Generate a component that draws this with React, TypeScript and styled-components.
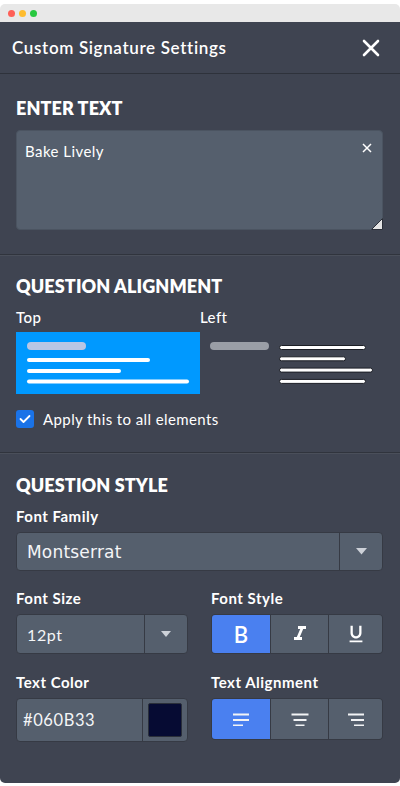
import React, { useState } from 'react'
import styled, { createGlobalStyle } from 'styled-components'
import { MdFormatItalic, MdFormatUnderlined } from 'react-icons/md'

const GlobalStyle = createGlobalStyle`
    html, body {
        margin: 0;
        padding: 0;
        background: #ffffff;
    }
    * {
        box-sizing: border-box;
    }
`;

const Window = styled.div`
    width: 400px;
    margin-top: 4px;
    border-radius: 5px;
    overflow: hidden;
    font-family: 'Lato', 'Liberation Sans', sans-serif;
    color: #ffffff;
`;

const TitleBar = styled.div`
    height: 18px;
    background: #e8e8e8;
    display: flex;
    align-items: center;
    gap: 4px;
    padding-left: 8px;
`;

const Dot = styled.span<{ $color: string }>`
    width: 7px;
    height: 7px;
    border-radius: 50%;
    background: ${p => p.$color};
`;

const Panel = styled.div`
    background: #3f4451;
    display: flex;
    flex-direction: column;
`;

const Header = styled.div`
    height: 52px;
    display: flex;
    align-items: center;
    justify-content: space-between;
    padding: 0 20px 0 12px;
    border-bottom: 1px solid #2e323b;
`;

const Title = styled.h1`
    margin: 0;
    font-size: 17px;
    font-weight: 600;
    letter-spacing: 0.65px;
`;

const CloseButton = styled.button`
    border: none;
    background: none;
    padding: 0;
    display: flex;
    cursor: pointer;
`;

const Section = styled.section<{ $top: number; $bottom: number; $last?: boolean }>`
    padding: ${p => p.$top}px 17px ${p => p.$bottom}px 16px;
    border-bottom: ${p => (p.$last ? 'none' : '1px solid #30343d')};
    box-shadow: ${p => (p.$last ? 'none' : '0 1px 0 #4a4f5a')};
`;

const SectionTitle = styled.h2`
    margin: 0 0 12px;
    font-size: 18px;
    line-height: 20px;
    font-weight: 800;
    letter-spacing: 0.1px;
`;

const TextBox = styled.div`
    position: relative;
    height: 100px;
    background: #555f6d;
    border: 1px solid #4b5461;
    border-radius: 4px;
    padding: 11px 8px;
    font-size: 15px;
    line-height: 18px;
    letter-spacing: 0.45px;
`;

const ClearIcon = styled.span`
    position: absolute;
    top: 12px;
    right: 10px;
    display: flex;
`;

const Grip = styled.span`
    position: absolute;
    right: -1px;
    bottom: -1px;
    display: flex;
`;

const AlignGrid = styled.div`
    display: grid;
    grid-template-columns: 184px 183px;
`;

const OptionLabel = styled.div`
    font-size: 15px;
    line-height: 18px;
    font-weight: 500;
    letter-spacing: 0.4px;
    margin-bottom: 6px;
`;

const OptionCard = styled.div<{ $active?: boolean }>`
    height: 62px;
    background: ${p => (p.$active ? '#0099ff' : 'transparent')};
    display: flex;
`;

const CheckRow = styled.label`
    display: flex;
    align-items: center;
    gap: 9px;
    margin-top: 16px;
    font-size: 15px;
    line-height: 18px;
    letter-spacing: 0.4px;
`;

const CheckBox = styled.span`
    width: 18px;
    height: 18px;
    border-radius: 3px;
    background: #1a73e8;
    display: flex;
    align-items: center;
    justify-content: center;
`;

const FieldLabel = styled.div`
    font-size: 15px;
    line-height: 18px;
    font-weight: 700;
    letter-spacing: 0.5px;
    margin-bottom: 7px;
`;

const FieldGrid = styled.div`
    display: grid;
    grid-template-columns: 172px 172px;
    column-gap: 23px;
    row-gap: 19px;
    margin-top: 18px;
`;

const Select = styled.div<{ $height: number; $caret: number }>`
    height: ${p => p.$height}px;
    display: grid;
    grid-template-columns: 1fr ${p => p.$caret}px;
    background: #555f6d;
    border: 1px solid #363a44;
    border-radius: 4px;
`;

const SelectValue = styled.div<{ $size: number; $pad: number }>`
    display: flex;
    align-items: center;
    padding-left: ${p => p.$pad}px;
    font-size: ${p => p.$size}px;
    letter-spacing: 0.6px;
    color: #f4f5f7;
`;

const MontserratValue = styled(SelectValue)`
    font-family: 'DejaVu Sans', 'Liberation Sans', sans-serif;
    font-weight: 400;
    letter-spacing: 0.2px;
`;

const CaretCell = styled.div`
    display: flex;
    align-items: center;
    justify-content: center;
    border-left: 1px solid #363a44;
`;

const Swatch = styled.span`
    align-self: center;
    justify-self: center;
    width: 34px;
    height: 34px;
    background: #060b33;
    border: 1px solid #2a2f3a;
    border-radius: 2px;
`;

const ButtonGroup = styled.div<{ $height: number }>`
    height: ${p => p.$height}px;
    display: grid;
    grid-template-columns: 58px 57px 1fr;
    border: 1px solid #363a44;
    border-radius: 4px;
    overflow: hidden;
    background: #363a44;
    gap: 1px;
`;

const ToggleButton = styled.button<{ $active?: boolean }>`
    border: none;
    padding: 0;
    background: ${p => (p.$active ? '#4a80f0' : '#555f6d')};
    color: #ffffff;
    display: flex;
    align-items: center;
    justify-content: center;
    font-family: 'Lato', 'Liberation Sans', sans-serif;
    font-size: 22px;
    font-weight: 600;
    cursor: pointer;
`;

const Caret = ({ w }: { w: number }) => (
    <svg width={w} height={w * 0.6} viewBox="0 0 10 6">
        <path d="M0 0 H10 L5 6 Z" fill="#cdd1d8" />
    </svg>
)

type AlignKind = 'left' | 'center' | 'right'

const AlignIcon = ({ kind }: { kind: AlignKind }) => {
    const widths: Record<AlignKind, number[]> = {
        left: [16, 16, 10],
        center: [17, 13, 9],
        right: [16, 13, 10],
    }
    return (
        <svg width="18" height="14" viewBox="0 0 18 14">
            {widths[kind].map((w, i) => {
                const x = kind === 'left' ? 1 : kind === 'center' ? (18 - w) / 2 : 17 - w
                return <rect key={i} x={x} y={1.5 + i * 5.5} width={w} height={2} fill="#f2f3f5" />
            })}
        </svg>
    )
}

const TopPreview = () => (
    <svg width="184" height="62" viewBox="0 0 184 62">
        <rect x="11" y="10" width="59" height="8" rx="4" fill="#b9c6e4" />
        <rect x="11" y="26" width="123" height="4" rx="2" fill="#ffffff" />
        <rect x="11" y="37" width="94" height="4" rx="2" fill="#ffffff" />
        <rect x="11" y="47.5" width="162" height="4" rx="2" fill="#ffffff" />
    </svg>
)

const LeftPreview = () => (
    <svg width="183" height="62" viewBox="0 0 183 62">
        <rect x="10" y="10" width="59" height="8" rx="4" fill="#9a9ea6" />
        {[86, 66, 93, 86].map((w, i) => (
            <rect key={i} x="79.5" y={13.5 + i * 11.3} width={w} height="4" rx="2"
                fill="#ffffff" stroke="#1b1e25" strokeWidth="1" />
        ))}
    </svg>
)

const App: React.FC = () => {
    const [ alignment, setAlignment ] = useState<AlignKind>('left')
    const [ bold, setBold ] = useState(true)

    return (
        <>
            <GlobalStyle />
            <Window>
                <TitleBar>
                    <Dot $color="#fe5f57" />
                    <Dot $color="#febc2e" />
                    <Dot $color="#28c840" />
                </TitleBar>
                <Panel>
                    <Header>
                        <Title>Custom Signature Settings</Title>
                        <CloseButton aria-label="Close">
                            <svg width="18" height="18" viewBox="0 0 18 18">
                                <path d="M2 2 L16 16 M16 2 L2 16" stroke="#ffffff" strokeWidth="2.6" strokeLinecap="round" />
                            </svg>
                        </CloseButton>
                    </Header>

                    <Section $top={24} $bottom={24}>
                        <SectionTitle>ENTER TEXT</SectionTitle>
                        <TextBox>
                            Bake Lively
                            <ClearIcon>
                                <svg width="10" height="10" viewBox="0 0 10 10">
                                    <path d="M1 1 L9 9 M9 1 L1 9" stroke="#ffffff" strokeWidth="1.5" />
                                </svg>
                            </ClearIcon>
                            <Grip>
                                <svg width="12" height="12" viewBox="0 0 12 12">
                                    <path d="M11.5 0.5 V11.5 H0.5 Z" fill="#e4e4e4" stroke="#2b2f38" strokeWidth="1" strokeLinejoin="round" />
                                </svg>
                            </Grip>
                        </TextBox>
                    </Section>

                    <Section $top={21} $bottom={24}>
                        <SectionTitle>QUESTION ALIGNMENT</SectionTitle>
                        <AlignGrid>
                            <div>
                                <OptionLabel>Top</OptionLabel>
                                <OptionCard $active><TopPreview /></OptionCard>
                            </div>
                            <div>
                                <OptionLabel>Left</OptionLabel>
                                <OptionCard><LeftPreview /></OptionCard>
                            </div>
                        </AlignGrid>
                        <CheckRow>
                            <CheckBox>
                                <svg width="12" height="10" viewBox="0 0 12 10">
                                    <path d="M1.5 5 L4.5 8 L10.5 2" stroke="#ffffff" strokeWidth="1.8" fill="none" strokeLinecap="round" strokeLinejoin="round" />
                                </svg>
                            </CheckBox>
                            Apply this to all elements
                        </CheckRow>
                    </Section>

                    <Section $top={22} $bottom={41} $last>
                        <SectionTitle>QUESTION STYLE</SectionTitle>
                        <FieldLabel>Font Family</FieldLabel>
                        <Select $height={39} $caret={43}>
                            <MontserratValue $size={17} $pad={10}>Montserrat</MontserratValue>
                            <CaretCell><Caret w={11} /></CaretCell>
                        </Select>

                        <FieldGrid>
                            <div>
                                <FieldLabel>Font Size</FieldLabel>
                                <Select $height={40} $caret={43}>
                                    <SelectValue $size={16} $pad={10}>12pt</SelectValue>
                                    <CaretCell><Caret w={10} /></CaretCell>
                                </Select>
                            </div>
                            <div>
                                <FieldLabel>Font Style</FieldLabel>
                                <ButtonGroup $height={40}>
                                    <ToggleButton $active={bold} onClick={() => setBold(!bold)}>B</ToggleButton>
                                    <ToggleButton><MdFormatItalic size={24} /></ToggleButton>
                                    <ToggleButton><MdFormatUnderlined size={22} /></ToggleButton>
                                </ButtonGroup>
                            </div>
                            <div>
                                <FieldLabel>Text Color</FieldLabel>
                                <Select $height={44} $caret={45}>
                                    <SelectValue $size={16.5} $pad={6}>#060B33</SelectValue>
                                    <CaretCell><Swatch /></CaretCell>
                                </Select>
                            </div>
                            <div>
                                <FieldLabel>Text Alignment</FieldLabel>
                                <ButtonGroup $height={42}>
                                    {(['left', 'center', 'right'] as AlignKind[]).map(kind => (
                                        <ToggleButton key={kind} $active={alignment === kind} onClick={() => setAlignment(kind)}>
                                            <AlignIcon kind={kind} />
                                        </ToggleButton>
                                    ))}
                                </ButtonGroup>
                            </div>
                        </FieldGrid>
                    </Section>
                </Panel>
            </Window>
        </>
    )
}

export default App
